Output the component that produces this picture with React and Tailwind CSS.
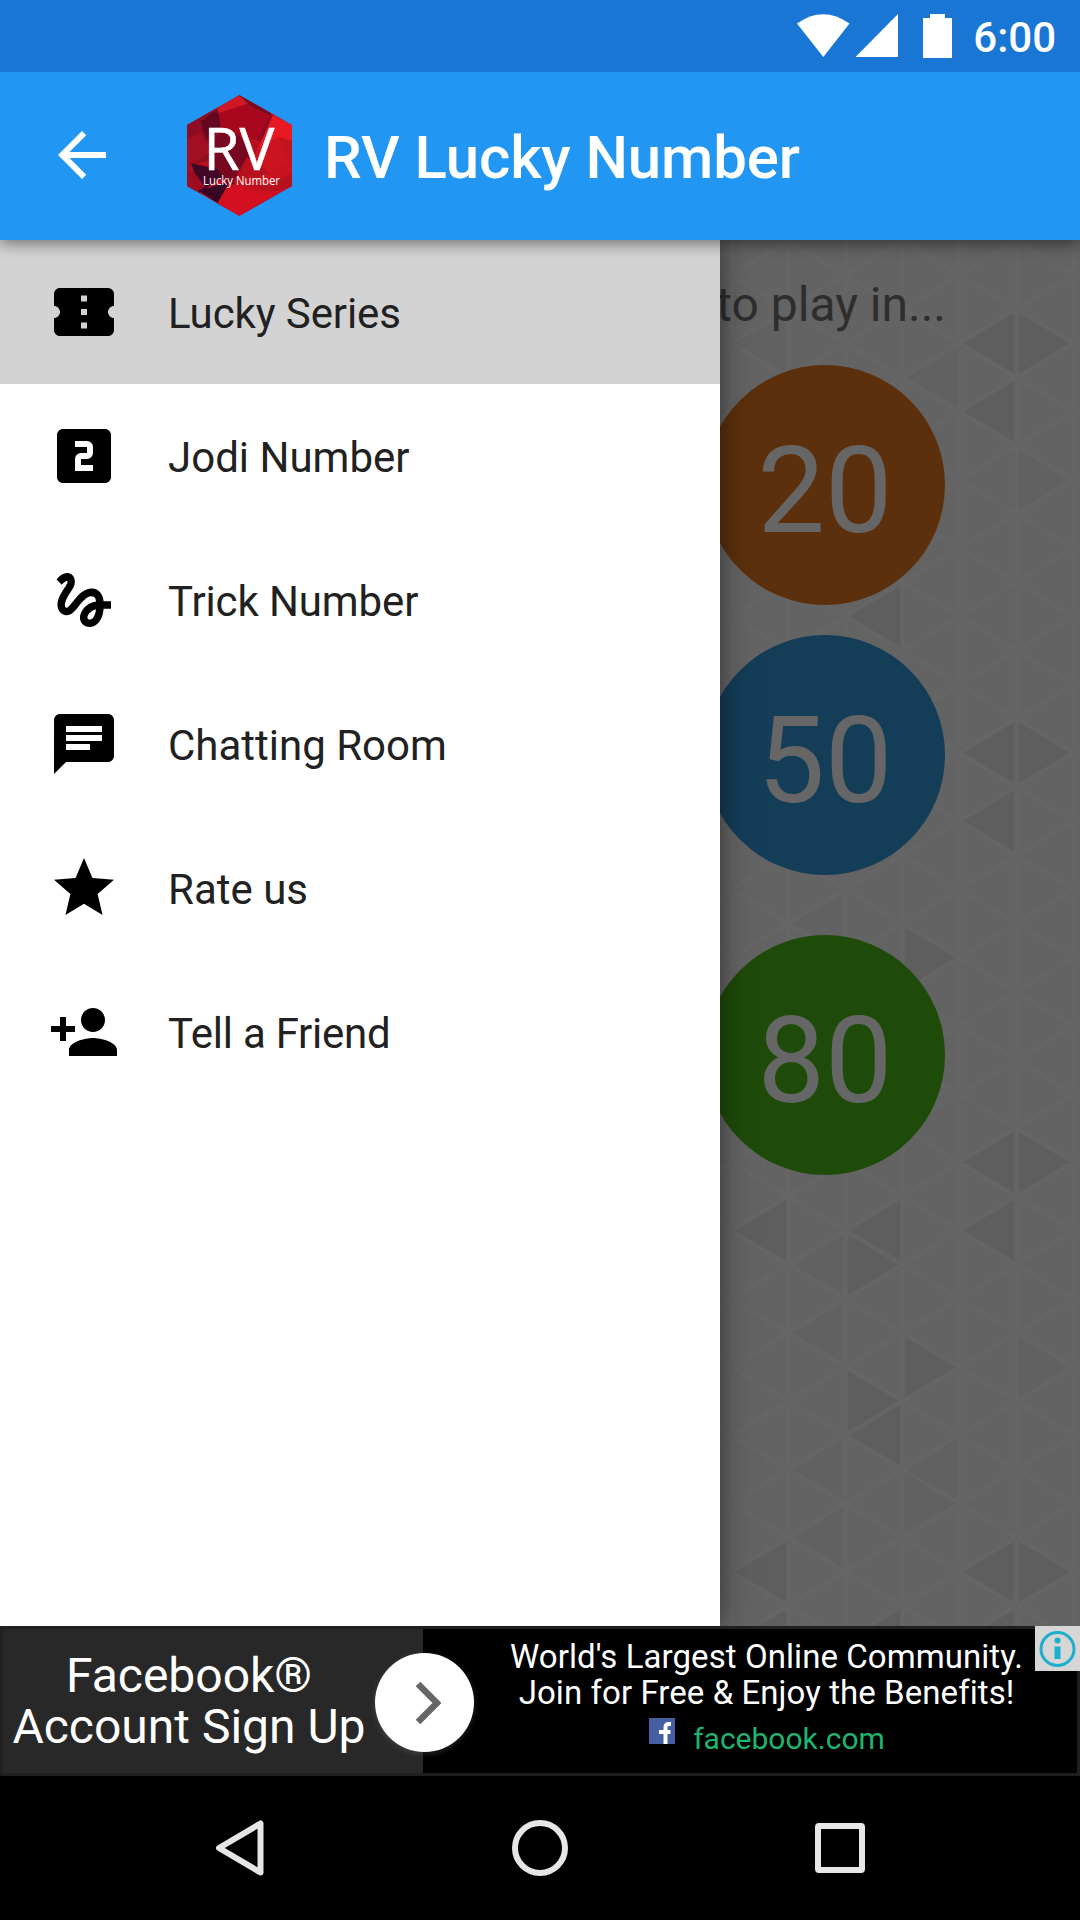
import React from 'react';
import {
  MdArrowBack,
  MdChat,
  MdConfirmationNumber,
  MdGesture,
  MdLooksTwo,
  MdPersonAdd,
  MdStar
} from 'react-icons/md';

const menuItems = [
  {
    label: 'Lucky Series',
    Icon: MdConfirmationNumber,
    active: true,
    tracking: 'tracking-[-0.1px]'
  },
  { label: 'Jodi Number', Icon: MdLooksTwo },
  { label: 'Trick Number', Icon: MdGesture, tracking: 'tracking-[-0.12px]' },
  { label: 'Chatting Room', Icon: MdChat },
  { label: 'Rate us', Icon: MdStar },
  { label: 'Tell a Friend', Icon: MdPersonAdd, tracking: 'tracking-[-0.25px]' }
];

const StatusBar = () => (
  <div className="relative z-30 flex h-[72px] items-center justify-end bg-[#1976d4] pr-6 text-white">
    <svg className="h-[72px] w-[160px]" viewBox="0 0 160 72" fill="currentColor">
      <path d="M1 23.500Q27 5 53.500 23.500L27.300 57Z" />
      <path d="M59.500 57L102 14V57Z" />
      <path d="M127 18H134V14H149V18H156V58H127Z" />
    </svg>
    <span className="ml-[17px] mt-[3px] text-[42px] font-medium leading-none">
      6:00
    </span>
  </div>
);

// faceted red hexagon with the app name
const Logo = () => (
  <svg className="h-[121px] w-[105px]" viewBox="0 0 105 121">
    <defs>
      <clipPath id="hex">
        <path d="M52.500 0L105 30V91L52.500 121L0 91V30Z" />
      </clipPath>
    </defs>
    <g clipPath="url(#hex)">
      <path fill="#b80f1f" d="M0 0H105V121H0Z" />
      <path fill="#8f0d22" d="M0 26L32 12L34 32L22 66L6 69L0 50Z" />
      <path fill="#a01022" d="M0 44L14 38L24 58L6 69L0 80Z" />
      <path fill="#64071f" d="M14 26L31 14L34 32L22 47L16 36Z" />
      <path fill="#d01824" d="M30 14L52 0L62 8L44 15L31 18Z" />
      <path fill="#a8081d" d="M32 18L60 9L84 22L70 45L34 34Z" />
      <path fill="#75091f" d="M52 0L84 18V21L62 10Z" />
      <path fill="#8d0b20" d="M70 45L84 20L90 24L78 48Z" />
      <path fill="#780820" d="M22 50L36 34L52 40L68 60L46 92L22 76Z" />
      <path fill="#e81923" d="M86 20L105 30V48L90 43L70 56Z" />
      <path fill="#cb1420" d="M78 48L92 42L105 66L82 78L62 64Z" />
      <path fill="#c2131f" d="M92 42L105 46V72Z" />
      <path fill="#b9101e" d="M60 62L82 78L58 96L46 88Z" />
      <path fill="#c9111f" d="M82 78L105 66V92L70 106L46 90Z" />
      <path fill="#b8101d" d="M60 90L84 90L105 78V92L90 96L76 95Z" />
      <path fill="#420626" d="M4 68L30 74L36 82L12 98L8 80Z" />
      <path fill="#9c0d22" d="M0 74L8 78L18 92L8 97L0 92Z" />
      <path fill="#3a0424" d="M12 96L36 88L42 88L32 109Z" />
      <path fill="#d40f1f" d="M42 88L70 100L90 98L52 121L30 109Z" />
    </g>
    <g fill="#fff">
      <text
        className="font-['Open_Sans',sans-serif]"
        x="16.500"
        y="75"
        fontSize="58"
        textLength="71"
        lengthAdjust="spacingAndGlyphs"
        stroke="#fff"
        strokeWidth="0.600"
      >
        RV
      </text>
      <text
        className="font-['Open_Sans',sans-serif]"
        x="16"
        y="89.500"
        fontSize="12.200"
        textLength="77"
        lengthAdjust="spacingAndGlyphs"
      >
        Lucky Number
      </text>
    </g>
  </svg>
);

const Toolbar = () => (
  <header className="relative z-20 flex h-[168px] items-center bg-[#2196f3] pl-[46px] text-white shadow-[0_4px_14px_rgba(0,0,0,0.45)]">
    <MdArrowBack className="-mt-0.5 size-[72px]" />
    <div className="-mt-0.5 ml-[69px]">
      <Logo />
    </div>
    <h1 className="ml-8 mt-1 text-[60px] font-medium leading-none tracking-[-0.13px] whitespace-nowrap">
      RV Lucky Number
    </h1>
  </header>
);

/*
 * Triangular wallpaper. Columns are 57px apart and the nodes of every
 * other column are shifted down by half a step.
 */
const COL = 57;
const STEP = 68.25;
const colX = (c) => 959.5 + c * COL;
const rowY = (r) => 103.3 + r * STEP;

// [column of the tip, row of the tip, direction of the flat side]
const darkTriangles = [
  [0, 0, 1], [2, 0, -1], [0, 1, 1], [-2, 4, 1],
  [0, 6, 1], [2, 6, -1], [0, 7, 1], [0, 9, -1],
  [0, 12, 1], [2, 12, -1], [-4, 13, 1], [-2, 13, 1], [0, 13, 1],
  [-1, 13.5, -1], [0, 15, -1], [-1, 15.5, -1], [-2, 16, 1],
  [-4, 18, 1], [0, 18, 1], [2, 18, -1],
  [-4, 19, 1], [-2, 19, 1], [0, 19, 1]
];
const softTriangles = [
  [-4, 0, 1], [-1, 0.5, 1], [-3, 8.5, 1], [-4, 12, -1],
  [-3, 13.5, 1], [-3, 14.5, 1], [2, 15, -1], [-3, 16.5, 1],
  [-1, 16.5, 1], [-3, 17.5, 1], [2, 2, -1], [0, 17, -1]
];

const trianglePath = ([c, r, side]) => {
  const x = colX(c);
  const y = rowY(r);
  const x2 = x + side * (COL - 2);
  return `M${x + side * 3} ${y}L${x2} ${y - 31}V${y + 31}Z`;
};

const Wallpaper = () => {
  const lines = [];
  for (let c = -4; c <= 2; c++) {
    lines.push(`M${colX(c)} 0V1386`);
  }
  for (let r = -6; r < 24; r++) {
    const y = rowY(r);
    lines.push(`M${colX(-5)} ${y - STEP / 2}L${colX(3)} ${y + STEP * 3.5}`);
    lines.push(`M${colX(-5)} ${y + STEP / 2}L${colX(3)} ${y - STEP * 3.5}`);
  }
  return (
    <svg className="absolute inset-0 h-full w-full" viewBox="0 0 1080 1386">
      <path d={softTriangles.map(trianglePath).join('')} fill="#f3f3f3" />
      <path d={darkTriangles.map(trianglePath).join('')} fill="#ebebeb" />
      <path d={lines.join('')} stroke="#ffffff" strokeOpacity="0.75" strokeWidth="4" fill="none" />
    </svg>
  );
};

const Ball = ({ children, className }) => (
  <div
    className={`flex size-[240px] items-center justify-center rounded-full pt-3 text-[120px] leading-none text-white ${className}`}
  >
    {children}
  </div>
);

const Home = () => (
  <div className="relative flex h-full flex-col items-end bg-[#f7f8f7] pr-[134px]">
    <Wallpaper />
    <p className="relative mt-[37px] text-[48px] leading-[56px] text-[#737373]">
      to play in...
    </p>
    <div className="relative mr-px mt-8 flex flex-col">
      <Ball className="bg-[#e67820]">20</Ball>
      <Ball className="mt-[30px] bg-[#3498db]">50</Ball>
      <Ball className="mt-[60px] bg-[#4dbb17]">80</Ball>
    </div>
  </div>
);

const Drawer = () => (
  <nav className="absolute inset-y-0 left-0 w-[720px] bg-white shadow-[0_0_28px_rgba(0,0,0,0.5)]">
    {menuItems.map(({ label, Icon, active, tracking = '' }) => (
      <div
        key={label}
        className={`flex h-36 items-center gap-12 pl-12 ${active ? 'bg-[#d3d3d3]' : ''}`}
      >
        <Icon className="size-[72px] text-black" />
        <span className={`mt-0.5 text-[42px] text-[#212121] ${tracking}`}>{label}</span>
      </div>
    ))}
  </nav>
);

const AdBanner = () => (
  <div className="relative z-10 flex h-[150px] bg-black text-center text-white">
    <div className="w-[423px] bg-[#282828] pl-[3px] pr-[48px] pt-6 text-[48px] leading-[51px] whitespace-nowrap">
      Facebook®
      <br />
      Account Sign Up
    </div>
    <div className="flex-1 pl-[30px] pt-[13px]">
      <div className="text-[33px] leading-9 tracking-[0.07px] whitespace-nowrap">
        World's Largest Online Community.
        <br />
        Join for Free &amp; Enjoy the Benefits!
      </div>
      <div className="flex items-start justify-center gap-[18px] pl-px">
        <svg className="mt-[7px] size-[26px]" viewBox="0 0 26 26">
          <path fill="#4460a0" d="M0 0H26V26H0Z" />
          <path
            fill="none"
            stroke="#fff"
            strokeWidth="4"
            d="M22 6H19.500Q16.500 6 16.500 9.500V26M10 14H21.500"
          />
        </svg>
        <span className="mt-[3px] text-[30px] leading-[50px] text-[#1fb46f]">facebook.com</span>
      </div>
    </div>
    <div className="pointer-events-none absolute inset-0 border-[3px] border-[#1f1f1f]" />
    <div className="absolute left-[375px] top-[27px] flex size-[99px] items-center justify-center rounded-full bg-white shadow-[0_2px_6px_rgba(120,120,120,0.3)]">
      <svg className="ml-[6px] h-[44px] w-[26px]" viewBox="0 0 26 44">
        <path d="M3 3L22 22L3 41" fill="none" stroke="#666" strokeWidth="6.500" />
      </svg>
    </div>
    <div className="absolute right-0 top-0 size-[45px] bg-[#d6d6d6]">
      <svg viewBox="0 0 45 45">
        <circle cx="22.500" cy="23" r="16.500" fill="none" stroke="#1cb0cc" strokeWidth="3" />
        <circle cx="22.500" cy="14.500" r="3" fill="#1cb0cc" />
        <path d="M19.500 20.500H25.500V33H19.500Z" fill="#1cb0cc" />
      </svg>
    </div>
  </div>
);

const NavBar = () => (
  <div className="flex h-36 items-center justify-center gap-[240px] bg-black">
    <svg className="size-[60px]" viewBox="0 0 60 60">
      <path
        d="M50.500 5.500V54.500L9 30Z"
        fill="none"
        stroke="#e6e6e6"
        strokeWidth="6"
        strokeLinejoin="round"
      />
    </svg>
    <div className="flex size-[60px] items-center justify-center">
      <div className="size-14 rounded-full border-[6px] border-[#e6e6e6]" />
    </div>
    <div className="flex size-[60px] items-center justify-center">
      <div className="size-[50px] rounded-[4px] border-[6px] border-[#e6e6e6]" />
    </div>
  </div>
);

const App = () => (
  <div className="flex h-[1920px] w-[1080px] flex-col overflow-hidden bg-black font-['Roboto',sans-serif]">
    <StatusBar />
    <Toolbar />
    <main className="relative h-[1386px] overflow-hidden">
      <Home />
      <div className="absolute inset-0 bg-black/60" />
      <Drawer />
    </main>
    <AdBanner />
    <NavBar />
  </div>
);
export default App;
